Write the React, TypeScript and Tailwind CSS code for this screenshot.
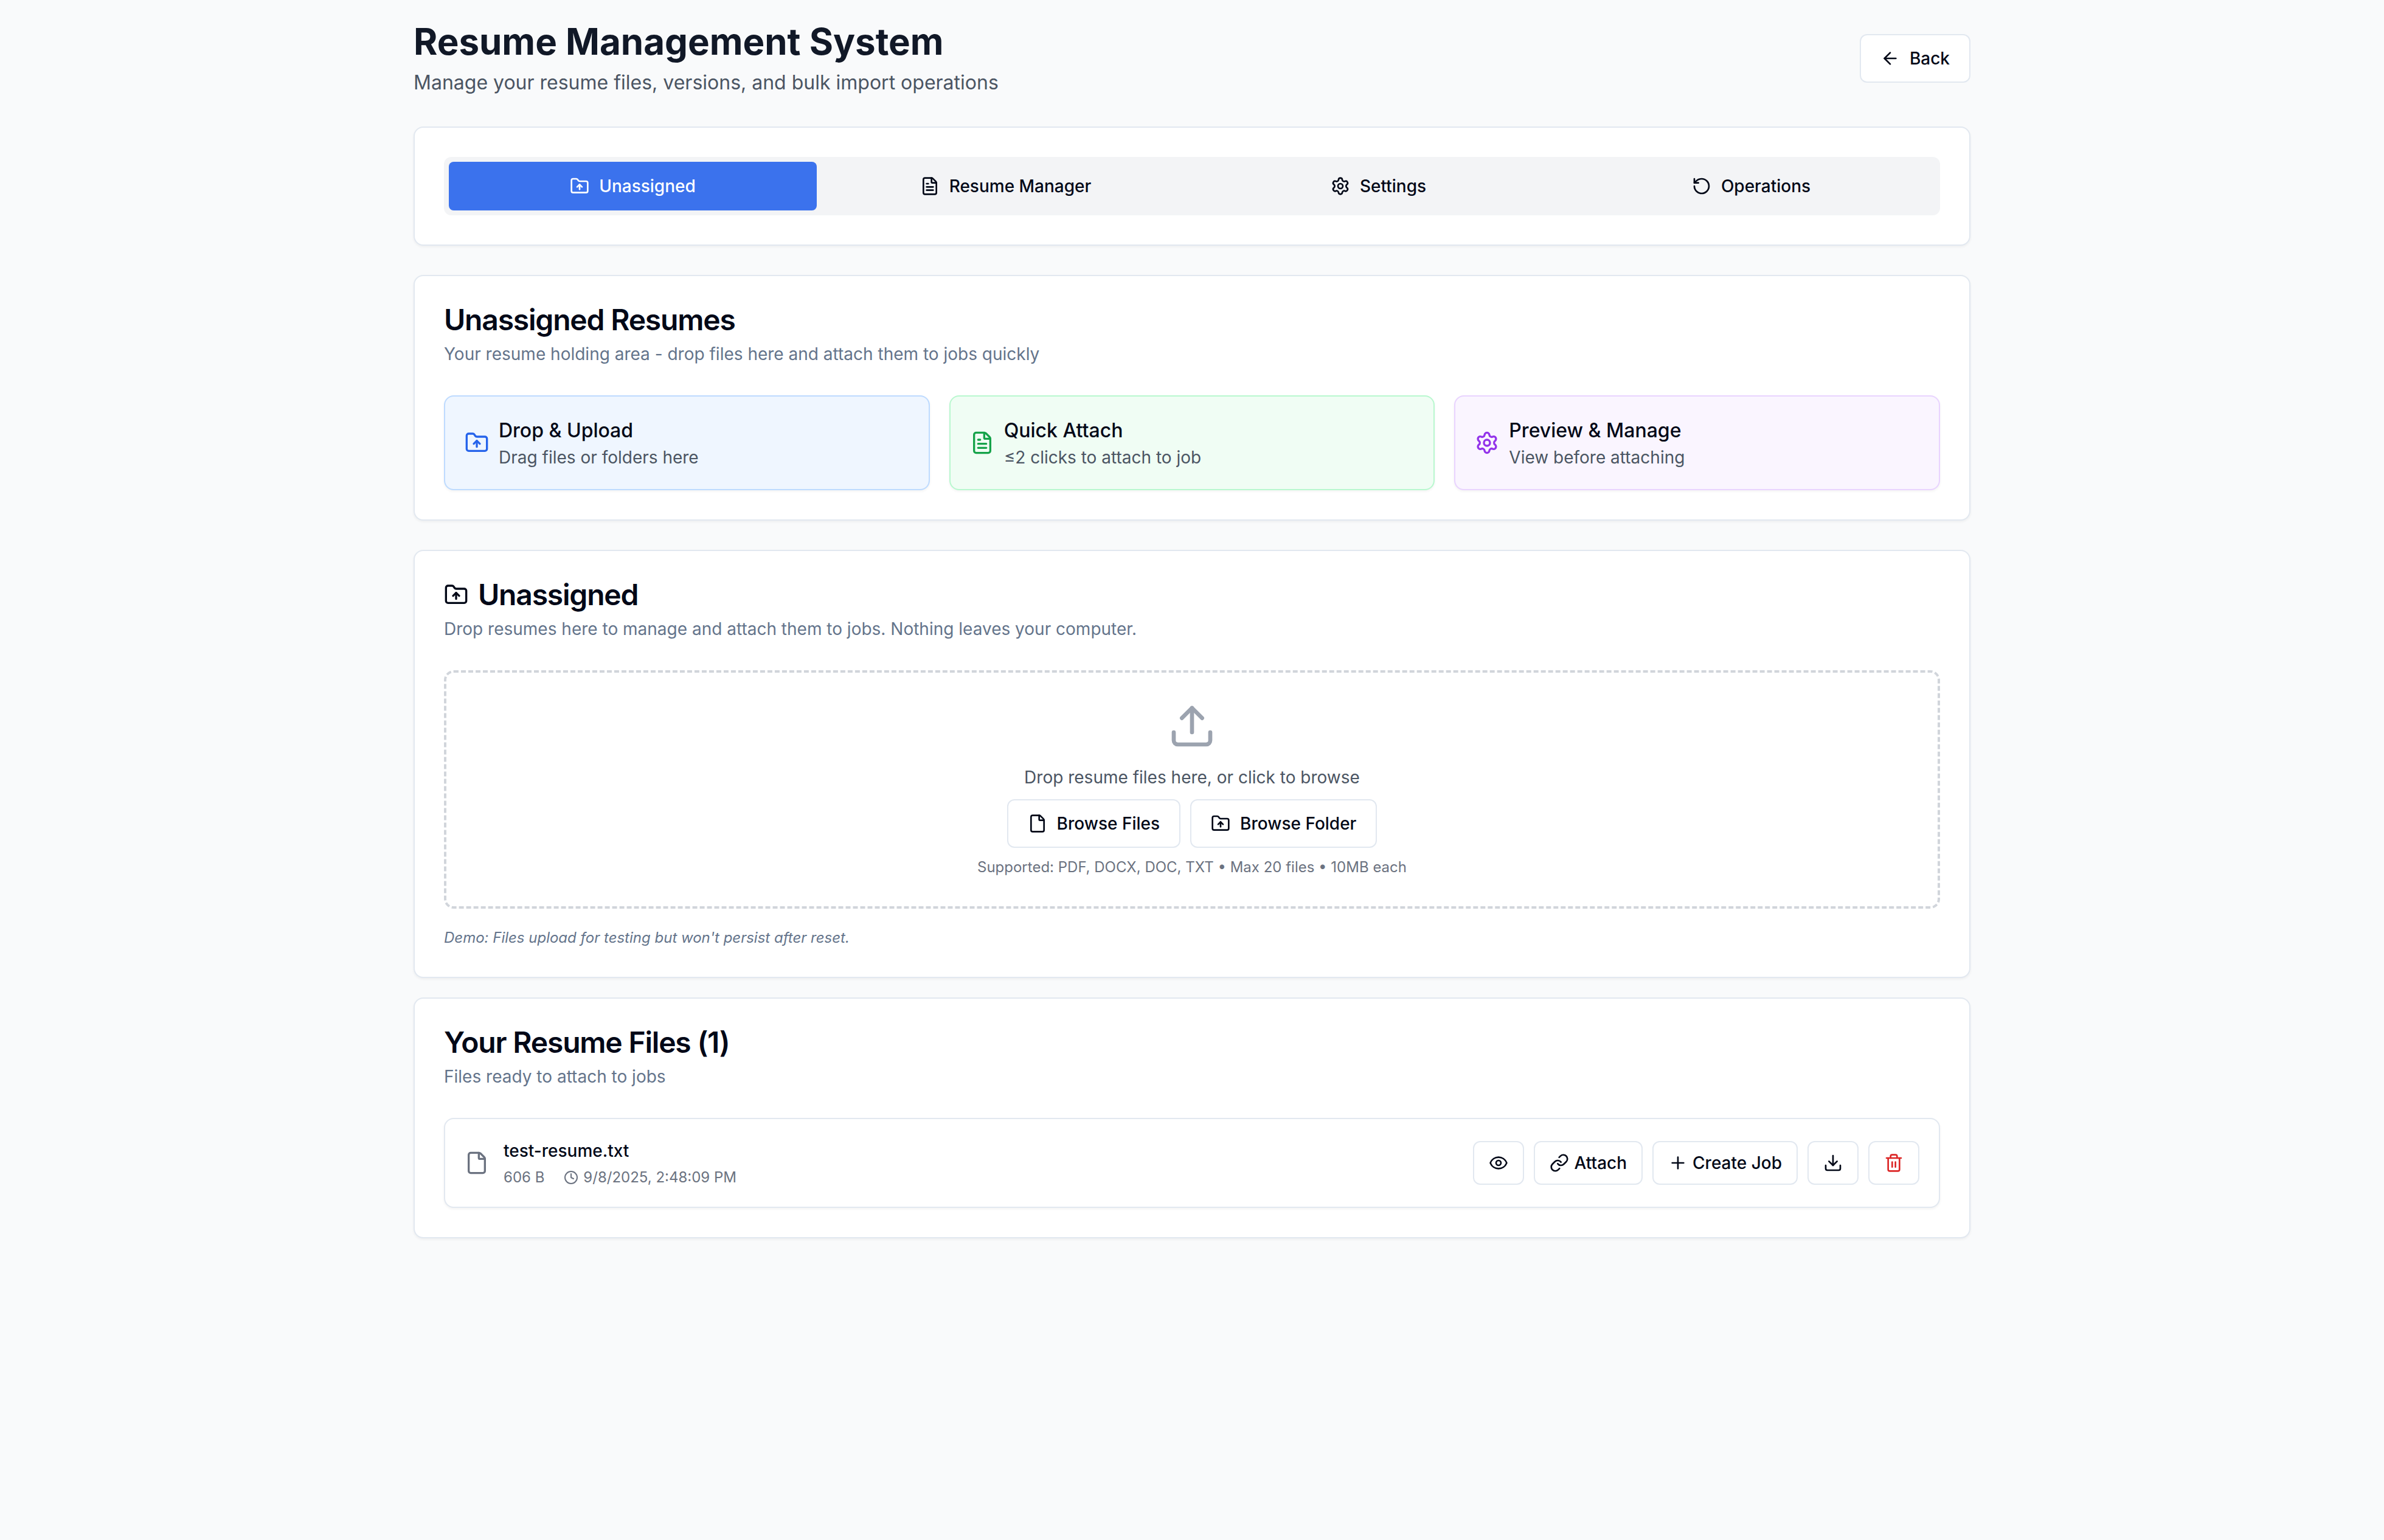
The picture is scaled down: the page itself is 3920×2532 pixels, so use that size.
import type { ReactNode } from "react";
import { ArrowLeft, Clock, Download, Eye, File, FileText, FolderUp, Link, Plus, RotateCcw, Settings, Trash2, Upload } from "lucide-react";

const cardClass = "rounded-2xl border-2 border-[#e2e8f0] bg-white p-12 shadow-[0_2px_4px_rgba(0,0,0,0.05)]";
const outlineButton = "flex items-center justify-center rounded-xl border-2 border-[#e2e8f0] bg-white text-[28px] leading-10 font-medium text-[#020817]";

function SectionHead({ title, description, icon }: { title: string; description: string; icon?: ReactNode }) {
  return (
    <div>
      <h2 className="flex items-center gap-4 text-5xl font-semibold tracking-tight text-[#020817]">
        {icon}
        {title}
      </h2>
      <p className="mt-3 text-[28px] leading-10 text-[#64748b]">{description}</p>
    </div>
  );
}

function Feature({ icon, title, text, box }: { icon: ReactNode; title: string; text: string; box: string }) {
  return (
    <div className={`flex items-center gap-4 rounded-2xl border-2 p-8 shadow-[0_2px_4px_rgba(0,0,0,0.05)] ${box}`}>
      {icon}
      <div>
        <div className="text-[32px] leading-12 font-medium text-[#020817]">{title}</div>
        <div className="text-[28px] leading-10 text-[#4b5563]">{text}</div>
      </div>
    </div>
  );
}

export default function App() {
  const tabs = [
    { icon: FolderUp, label: "Unassigned", active: true },
    { icon: FileText, label: "Resume Manager", active: false },
    { icon: Settings, label: "Settings", active: false },
    { icon: RotateCcw, label: "Operations", active: false },
  ];

  return (
    <div className="min-h-screen bg-[#f9fafb] font-[Inter,sans-serif]">
      <div className="mx-auto w-[2560px] py-8">
        {/* Header */}
        <div className="mb-12 flex items-center justify-between">
          <div>
            <h1 className="text-6xl leading-18 font-bold text-[#111827]">Resume Management System</h1>
            <p className="mt-2 text-[32px] leading-12 text-[#4b5563]">Manage your resume files, versions, and bulk import operations</p>
          </div>
          <button className={`${outlineButton} h-20 gap-4 px-8`}>
            <ArrowLeft className="h-8 w-8" />
            Back
          </button>
        </div>

        {/* Tabs */}
        <div className={cardClass}>
          <div className="grid grid-cols-4 gap-2 rounded-xl bg-[#f3f4f6] p-2">
            {tabs.map((tab) => (
              <div
                key={tab.label}
                className={`flex h-20 items-center justify-center gap-4 rounded-lg text-[28px] font-medium ${tab.active ? "bg-[#3b72ed] text-white" : "text-[#020817]"}`}
              >
                <tab.icon className="h-8 w-8" />
                {tab.label}
              </div>
            ))}
          </div>
        </div>

        {/* Intro */}
        <div className={`${cardClass} mt-12`}>
          <SectionHead title="Unassigned Resumes" description="Your resume holding area - drop files here and attach them to jobs quickly" />
          <div className="mt-12 grid grid-cols-3 gap-8">
            <Feature box="border-blue-200 bg-blue-50" icon={<FolderUp className="h-10 w-10 shrink-0 text-[#2563eb]" />} title="Drop & Upload" text="Drag files or folders here" />
            <Feature box="border-green-200 bg-green-50" icon={<FileText className="h-10 w-10 shrink-0 text-[#16a34a]" />} title="Quick Attach" text="≤2 clicks to attach to job" />
            <Feature box="border-purple-200 bg-purple-50" icon={<Settings className="h-10 w-10 shrink-0 text-[#9333ea]" />} title="Preview & Manage" text="View before attaching" />
          </div>
        </div>

        {/* Upload zone */}
        <div className={`${cardClass} mt-12`}>
          <SectionHead
            title="Unassigned"
            description="Drop resumes here to manage and attach them to jobs. Nothing leaves your computer."
            icon={<FolderUp className="h-10 w-10" />}
          />
          <div className="mt-12 flex flex-col items-center rounded-2xl border-4 border-dashed border-[#d1d5db] p-12">
            <Upload className="h-20 w-20 text-[#9ca3af]" />
            <p className="mt-6 text-[28px] leading-10 text-[#4b5563]">Drop resume files here, or click to browse</p>
            <div className="mt-4 flex gap-4">
              <button className={`${outlineButton} h-20 gap-4 px-8`}>
                <File className="h-8 w-8" />
                Browse Files
              </button>
              <button className={`${outlineButton} h-20 gap-4 px-8`}>
                <FolderUp className="h-8 w-8" />
                Browse Folder
              </button>
            </div>
            <p className="mt-4 text-2xl text-[#6b7280]">Supported: PDF, DOCX, DOC, TXT • Max 20 files • 10MB each</p>
          </div>
          <p className="mt-8 text-2xl text-[#64748b] italic">Demo: Files upload for testing but won't persist after reset.</p>
        </div>

        {/* Files */}
        <div className={`${cardClass} mt-8`}>
          <SectionHead title="Your Resume Files (1)" description="Files ready to attach to jobs" />
          <div className="mt-12 flex items-center justify-between rounded-2xl border-2 border-[#e2e8f0] bg-white p-8 shadow-[0_2px_4px_rgba(0,0,0,0.05)]">
            <div className="flex items-center gap-6">
              <File className="h-10 w-10 text-[#6b7280]" />
              <div>
                <div className="text-[28px] leading-10 font-medium text-[#020817]">test-resume.txt</div>
                <div className="mt-2 flex items-center gap-8 text-2xl text-[#6b7280]">
                  <span>606 B</span>
                  <span className="flex items-center gap-2">
                    <Clock className="h-6 w-6" />
                    9/8/2025, 2:48:09 PM
                  </span>
                </div>
              </div>
            </div>
            <div className="flex gap-4">
              <button className={`${outlineButton} h-18 px-6`}>
                <Eye className="h-8 w-8" />
              </button>
              <button className={`${outlineButton} h-18 gap-2 px-6`}>
                <Link className="h-8 w-8" />
                Attach
              </button>
              <button className={`${outlineButton} h-18 gap-2 px-6`}>
                <Plus className="h-8 w-8" />
                Create Job
              </button>
              <button className={`${outlineButton} h-18 px-6`}>
                <Download className="h-8 w-8" />
              </button>
              <button className={`${outlineButton} h-18 px-6`}>
                <Trash2 className="h-8 w-8 text-[#dc2626]" />
              </button>
            </div>
          </div>
        </div>
      </div>
    </div>
  );
}
